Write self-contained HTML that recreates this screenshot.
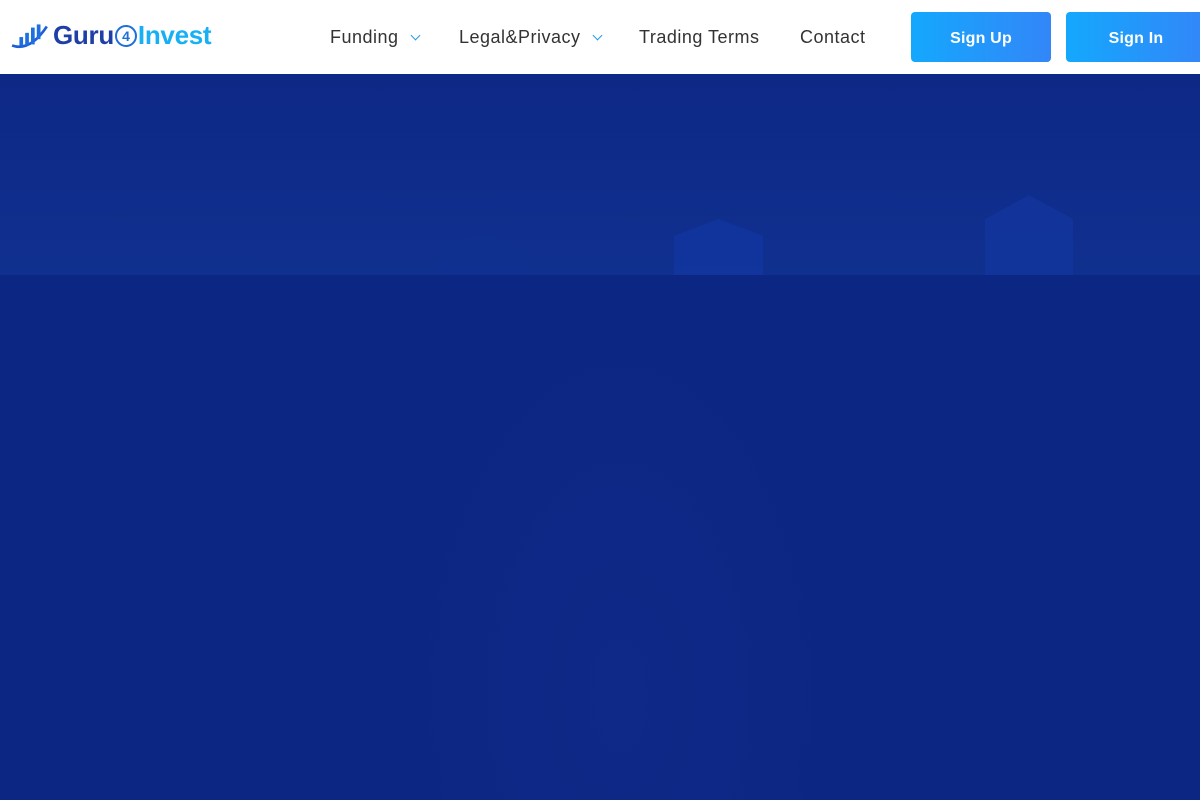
<!DOCTYPE html>
<html><head><meta charset="utf-8"><style>
*{margin:0;padding:0;box-sizing:border-box}
body{width:1200px;height:800px;overflow:hidden;font-family:"Liberation Sans",sans-serif;background:#0c2683}
header{position:absolute;top:0;left:0;width:1200px;height:74px;background:#fff}
.logo{position:absolute;left:11px;top:20px;display:flex;align-items:center}
.logo span{font-weight:bold;font-size:26px;letter-spacing:-0.3px}
nav a{position:absolute;top:27px;font-size:18px;color:#333;text-decoration:none;letter-spacing:0.5px}
.chev{display:inline-block;width:7px;height:7px;border-right:1.6px solid #1e9bf0;border-bottom:1.6px solid #1e9bf0;transform:rotate(45deg);margin-left:13px;position:relative;top:-4px}
.btn{position:absolute;top:12px;height:50px;border-radius:4px;background:linear-gradient(90deg,#14a8fd,#3386f8);color:#fff;font-size:16px;font-weight:bold;display:flex;align-items:center;justify-content:center;padding-top:3px;letter-spacing:0.2px}
.hero{position:absolute;top:74px;left:0;width:1200px;height:726px;background:#0c2683}
.band{position:absolute;top:0;left:0;width:1200px;height:201px;background:linear-gradient(180deg,#0e2886,#10308f)}
.house{position:absolute;background:#1236a0;clip-path:polygon(0 30%,50% 0,100% 30%,100% 100%,0 100%)}
.glow{position:absolute;left:380px;top:201px;width:480px;height:525px;background:radial-gradient(ellipse at center 80%,rgba(20,50,150,.25),rgba(12,38,131,0) 70%)}
</style></head><body>
<header>
<div class="logo">
<svg width="40" height="28" viewBox="0 0 38 26"><path d="M1 22 Q18 28 34 4" stroke="#1e5ed6" stroke-width="2.5" fill="none"/><rect x="8" y="14" width="3.5" height="8" fill="#1e6fe0"/><rect x="13.5" y="10" width="3.5" height="12" fill="#1e6fe0"/><rect x="19" y="5" width="3.5" height="16" fill="#1e6fe0"/><rect x="24.5" y="2" width="3.5" height="14" fill="#1e6fe0"/></svg>
<span style="color:#1f3fa8;margin-left:2px">Guru</span><span style="display:inline-flex;width:22px;height:22px;border:2.5px solid #1f6fd8;border-radius:50%;color:#1f6fd8;font-size:14px;align-items:center;justify-content:center;margin:0 1px">4</span><span style="color:#17b0f5">Invest</span>
</div>
<nav>
<a style="left:330px">Funding<i class="chev"></i></a>
<a style="left:459px">Legal&amp;Privacy<i class="chev"></i></a>
<a style="left:639px">Trading Terms</a>
<a style="left:800px">Contact</a>
</nav>
<div class="btn" style="left:911px;width:140px">Sign Up</div>
<div class="btn" style="left:1066px;width:140px">Sign In</div>
</header>
<div class="hero">
<div class="band"></div>
<div class="house" style="left:438px;top:160px;width:90px;height:41px;opacity:.15"></div>
<div class="house" style="left:674px;top:145px;width:89px;height:56px;opacity:.8"></div>
<div class="house" style="left:985px;top:121px;width:88px;height:80px;opacity:.7"></div>
<div class="glow"></div>
</div>
</body></html>
